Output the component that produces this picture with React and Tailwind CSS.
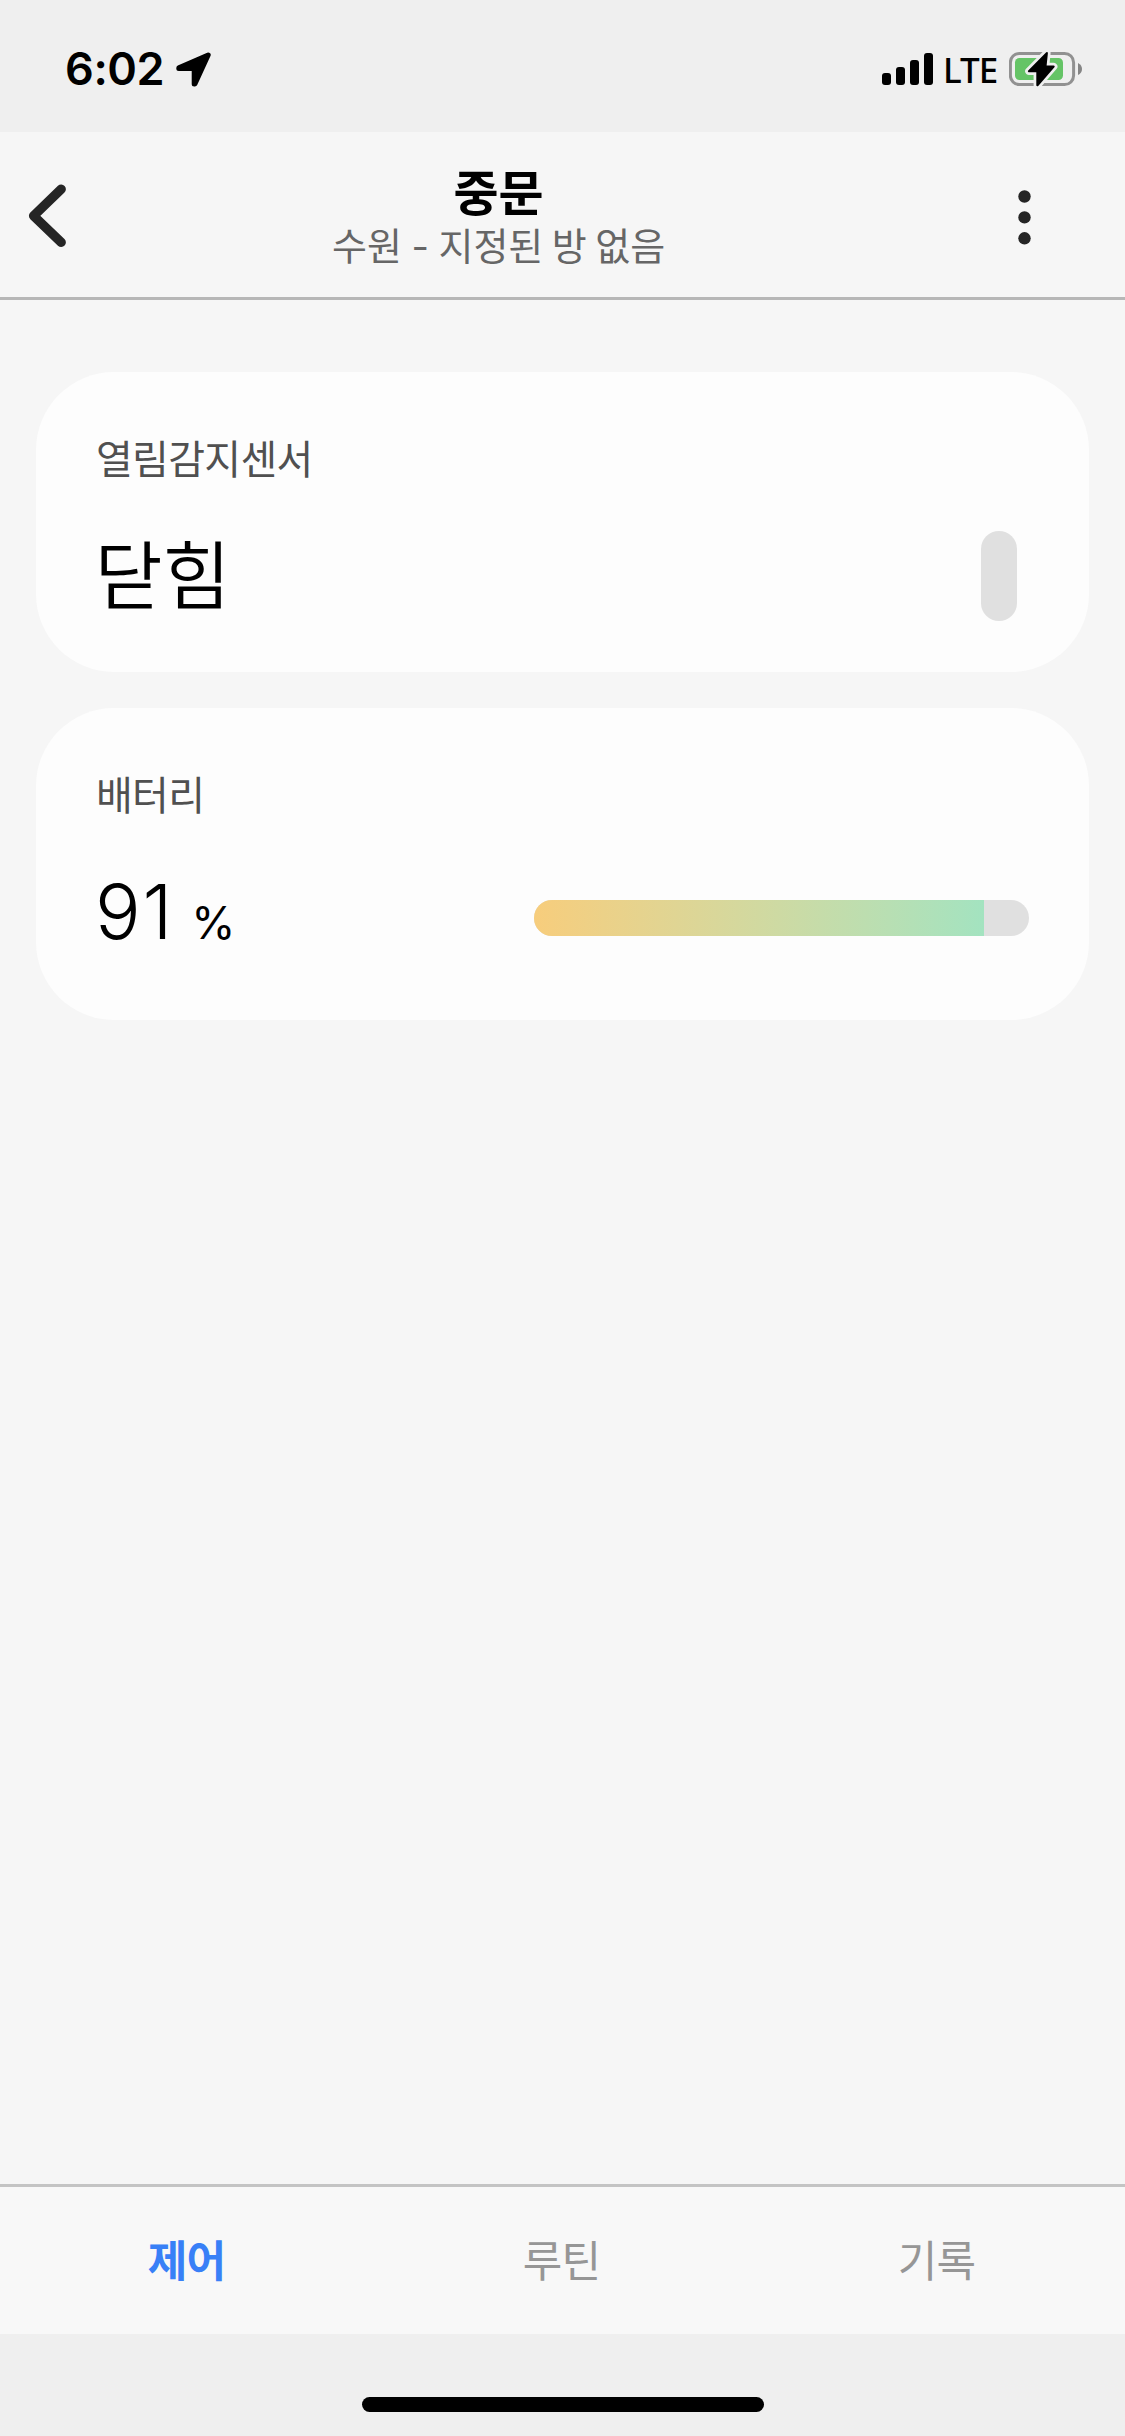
import React from "react";

const KR = "font-['Noto_Sans_CJK_KR',sans-serif]";
const BOLT = "M37.8 4.2 L20 22.2 H28.4 L28.4 36.2 L44.6 17.6 H36.4 Z";

function StatusBar() {
  return (
    <div className="flex h-[132px] shrink-0 items-start justify-between bg-[#efefef] pt-[42px] pr-[42px] pl-[65px] text-black">
      <div className="flex h-[54px] items-center">
        <span className="w-[101px] font-['Inter',sans-serif] text-[45px] leading-[54px] font-semibold tracking-[-0.4px]">6:02</span>
        <svg className="ml-[9px] h-[36px] w-[36px]" viewBox="0 0 36 36">
          <path d="M33.2 4 L3.8 16.9 V17.4 H19.2 V33 H19.9 Z" fill="#000" stroke="#000" strokeWidth="5" strokeLinejoin="round" />
        </svg>
      </div>
      <div className="flex h-[54px] items-center">
        <div className="flex h-[32px] items-end gap-[5px]">
          <i className="h-[12px] w-[9px] rounded-[3px] bg-black" />
          <i className="h-[18px] w-[9px] rounded-[3px] bg-black" />
          <i className="h-[25px] w-[9px] rounded-[3px] bg-black" />
          <i className="h-[32px] w-[9px] rounded-[3px] bg-black" />
        </div>
        <span className="ml-[10px] w-[62px] pt-px font-['Noto_Sans',sans-serif] text-[35px] leading-[54px] font-medium tracking-[-0.9px]">LTE</span>
        <svg className="ml-[4px] h-[40px] w-[74px]" viewBox="0 0 74 40">
          <rect x="1.4" y="4.4" width="63.2" height="31.2" rx="9" fill="none" stroke="#919191" strokeWidth="3" />
          <path d="M69 14 Q73 16 73 20 Q73 24 69 26 Z" fill="#858585" />
          <rect x="6" y="9" width="48" height="22" rx="4.5" fill="#65c466" />
          <path d={BOLT} fill="#efefef" stroke="#efefef" strokeWidth="7.6" strokeLinejoin="round" />
          <path d={BOLT} fill="#000" stroke="#000" strokeWidth="2.2" strokeLinejoin="round" />
        </svg>
      </div>
    </div>
  );
}

function Header() {
  return (
    <header className="flex h-[168px] shrink-0 border-b-[3px] border-[#b7b7b7] bg-[#f6f6f6]">
      <svg className="mt-[52px] ml-[28px] h-[64px] w-[40px]" viewBox="0 0 40 64">
        <path d="M33.2 5.2 L5.6 31.8 L33.2 58.3" fill="none" stroke="#252525" strokeWidth="9.4" strokeLinecap="round" strokeLinejoin="round" />
      </svg>
      <div className={`${KR} ml-[264px] flex flex-col items-center pt-[28px]`}>
        <h1 className="text-[49px] leading-[60px] font-bold text-black">중문</h1>
        <p className="text-[38px] leading-[48px] text-[#666]">
          수원 <span className="mx-px font-['Inter',sans-serif]">-</span> 지정된 방 없음
        </p>
      </div>
      <svg className="mt-[56px] mr-[94px] ml-auto h-[60px] w-[14px]" viewBox="0 0 14 60">
        <circle cx="7.5" cy="8.5" r="6.2" fill="#252525" />
        <circle cx="7.5" cy="29.4" r="6.2" fill="#252525" />
        <circle cx="7.5" cy="50.3" r="6.2" fill="#252525" />
      </svg>
    </header>
  );
}

export default function App() {
  const battery = 91;
  return (
    <div className="flex h-[2436px] w-[1125px] flex-col overflow-hidden bg-[#f6f6f6]">
      <StatusBar />
      <Header />
      <main className={`${KR} flex flex-1 flex-col gap-9 px-9 pt-[72px]`}>
        <section className="h-[300px] rounded-[78px] bg-[#fdfdfd] pr-[72px] pl-[60px]">
          <h2 className="pt-[56px] text-[40px] leading-[58px] tracking-[-0.7px] text-[#505050]">열림감지센서</h2>
          <div className="mt-[31px] flex h-[108px] items-center justify-between">
            <p className="ml-[-1.5px] text-[74px] leading-[108px] font-[350] text-black">닫힘</p>
            <span className="mt-[10px] h-[90px] w-9 rounded-full bg-[#e0e0e0]" />
          </div>
        </section>
        <section className="h-[312px] rounded-[78px] bg-[#fdfdfd] pr-[60px] pl-[60px]">
          <h2 className="pt-[56px] text-[40px] leading-[58px] tracking-[-0.7px] text-[#505050]">배터리</h2>
          <div className="mt-[49px] flex h-[92px] items-center justify-between">
            <p className="-ml-px font-['Inter',sans-serif] text-[76px] leading-[92px] font-light tracking-[1.8px] text-black">
              91<span className="ml-[17px] text-[45px] font-normal tracking-normal">%</span>
            </p>
            <div className="mt-[2px] h-9 w-[495px] overflow-hidden rounded-full bg-[#e0e0e0]">
              <div className="h-full bg-linear-to-r from-[#f7cd7c] to-[#a3e3c0]" style={{ width: `${battery}%` }} />
            </div>
          </div>
        </section>
      </main>
      <nav className={`${KR} grid h-[150px] shrink-0 grid-cols-3 border-t-[3px] border-[#c4c4c4] bg-[#f8f8f8] pt-[40px] text-center text-[43px] leading-[62px] tracking-[-0.8px] text-[#969696]`}>
        <span className="pr-[2px] font-bold text-[#3880f7]">제어</span>
        <span className="pr-[2px]">루틴</span>
        <span className="pr-[2px]">기록</span>
      </nav>
      <footer className="flex h-[102px] shrink-0 justify-center bg-[#efefef] pt-[63px]">
        <div className="h-[15px] w-[402px] rounded-full bg-black" />
      </footer>
    </div>
  );
}
